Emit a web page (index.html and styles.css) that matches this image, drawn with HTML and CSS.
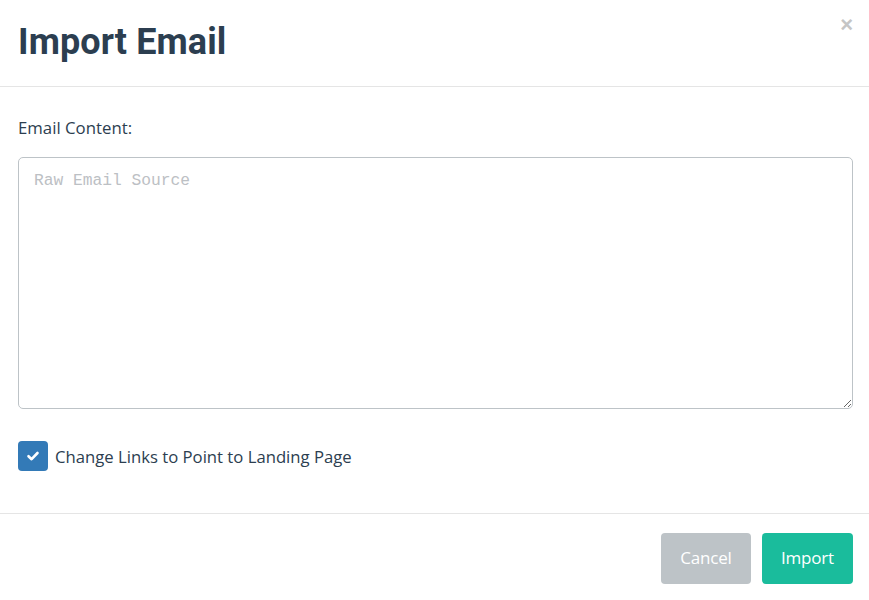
FILE: index.html
```html
<!DOCTYPE html>
<html>
<head>
<meta charset="utf-8">
<link rel="stylesheet" href="styles.css">
</head>
<body>
<div class="modal">
  <div class="modal-header">
    <h1 class="title">Import Email</h1>
    <span class="close">&times;</span>
  </div>
  <div class="modal-body">
    <label class="label">Email Content:</label>
    <textarea class="source" placeholder="Raw Email Source"></textarea>
    <div class="check-row">
      <span class="checkbox">
        <svg width="14" height="14" viewBox="0 0 14 14"><path d="M2.5 7.2 L5.6 10.2 L11.5 4" fill="none" stroke="#fff" stroke-width="2.6" stroke-linecap="round" stroke-linejoin="round"/></svg>
      </span>
      <span class="check-label">Change Links to Point to Landing Page</span>
    </div>
  </div>
  <div class="modal-footer">
    <button class="btn btn-cancel">Cancel</button>
    <button class="btn btn-import">Import</button>
  </div>
</div>
</body>
</html>
```
FILE: styles.css
```css
* { box-sizing: border-box; }
html, body { margin: 0; padding: 0; background: #fff; }
body {
  font-family: "Open Sans", "Noto Sans", sans-serif;
  color: #2c3e50;
  width: 869px;
  height: 600px;
  overflow: hidden;
}
.modal { display: flex; flex-direction: column; }
.modal-header {
  position: relative;
  height: 87px;
  border-bottom: 1px solid #e5e5e5;
  padding: 0 18px;
  display: flex;
  align-items: center;
}
.title {
  margin: 0;
  font-family: Roboto, "Liberation Sans", sans-serif;
  font-weight: 700;
  font-size: 36px;
  color: #2c3e50;
  letter-spacing: 0.1px;
  line-height: 1;
  padding-bottom: 2px;
}
.close {
  position: absolute;
  right: 16px;
  top: 14px;
  font-size: 22px;
  font-family: "Liberation Sans", sans-serif;
  color: #c5c5c5;
  font-weight: 700;
  line-height: 1;
}
.modal-body {
  padding: 30px 17px 0 18px;
  display: flex;
  flex-direction: column;
  height: 426px;
}
.label {
  font-size: 16.8px;
  line-height: 22px;
  margin-bottom: 18px;
}
.source {
  width: 835px;
  height: 252px;
  border: 1px solid #bdc3c7;
  border-radius: 5px;
  padding: 13px 15px;
  font-family: "Liberation Mono", monospace;
  font-size: 16.25px;
  color: #2c3e50;
  resize: vertical;
  outline: none;
}
.source::placeholder { color: #bcc0c4; }
.check-row {
  display: flex;
  align-items: center;
  margin-top: 32px;
}
.checkbox {
  width: 30px;
  height: 30px;
  border-radius: 4px;
  background: #337ab7;
  display: flex;
  align-items: center;
  justify-content: center;
  margin-right: 7px;
}
.check-label {
  font-size: 16.7px;
}
.modal-footer {
  border-top: 1px solid #e5e5e5;
  display: flex;
  justify-content: flex-end;
  gap: 11px;
  padding: 19px 16px 0 0;
}
.btn {
  height: 51px;
  border: none;
  border-radius: 4px;
  color: #fff;
  font-family: "Open Sans", "Noto Sans", sans-serif;
  font-size: 17px;
  letter-spacing: -0.2px;
  padding: 0 0 3px;
}
.btn-cancel { background: #bdc3c7; width: 90px; }
.btn-import { background: #1abc9c; width: 91px; }
```
